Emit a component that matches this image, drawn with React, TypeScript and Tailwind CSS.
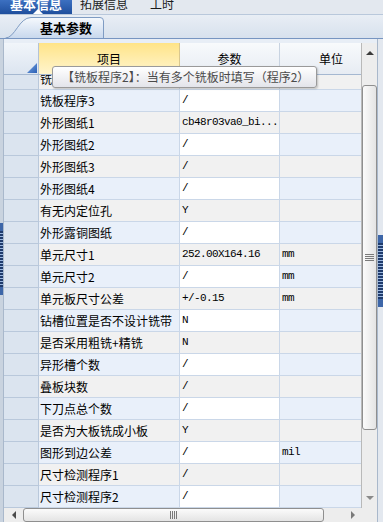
import React from 'react'

type Row = { label: string; value: string; unit: string }

const rows: Row[] = [
  { label: '铣板程序2', value: '/', unit: '' },
  { label: '铣板程序3', value: '/', unit: '' },
  { label: '外形图纸1', value: 'cb48r03va0_bi...', unit: '' },
  { label: '外形图纸2', value: '/', unit: '' },
  { label: '外形图纸3', value: '/', unit: '' },
  { label: '外形图纸4', value: '/', unit: '' },
  { label: '有无内定位孔', value: 'Y', unit: '' },
  { label: '外形露铜图纸', value: '/', unit: '' },
  { label: '单元尺寸1', value: '252.00X164.16', unit: 'mm' },
  { label: '单元尺寸2', value: '/', unit: 'mm' },
  { label: '单元板尺寸公差', value: '+/-0.15', unit: 'mm' },
  { label: '钻槽位置是否不设计铣带', value: 'N', unit: '' },
  { label: '是否采用粗铣+精铣', value: 'N', unit: '' },
  { label: '异形槽个数', value: '/', unit: '' },
  { label: '叠板块数', value: '/', unit: '' },
  { label: '下刀点总个数', value: '/', unit: '' },
  { label: '是否为大板铣成小板', value: 'Y', unit: '' },
  { label: '图形到边公差', value: '/', unit: 'mil' },
  { label: '尺寸检测程序1', value: '/', unit: '' },
  { label: '尺寸检测程序2', value: '/', unit: '' },
]

const cjk = "font-['Noto_Sans_CJK_SC',sans-serif]"
const mono = "font-['Liberation_Mono',monospace] text-[11px] tracking-[-0.6px]"

function SplitterHandle() {
  return (
    <div className="flex h-[72px] flex-col bg-[#2a4a7e]">
      <div className="h-[8px] bg-[#3d66a8]" />
      <div className="flex-1 bg-[repeating-linear-gradient(to_bottom,#1f3b6c_0px,#1f3b6c_2px,#9ab7e0_2px,#9ab7e0_3px)]" />
      <div className="h-[8px] bg-[#3d66a8]" />
    </div>
  )
}

function VScroll() {
  return (
    <div className="flex w-[15px] flex-col bg-[#ededed]">
      <div className="flex h-[20px] items-center justify-center">
        <span className="h-0 w-0 border-x-[4px] border-b-[4px] border-x-transparent border-b-[#3a3a3a]" />
      </div>
      <div className="h-[22px]" />
      <div className="flex h-[345px] flex-col items-center justify-center gap-[1px] rounded-[3px] border border-[#8f8f8f] bg-gradient-to-r from-[#fbfbfb] to-[#e4e4e4]">
        <span className="h-[1px] w-[9px] bg-[#7a7a7a]" />
        <span className="h-[1px] w-[9px] bg-[#7a7a7a]" />
        <span className="h-[1px] w-[9px] bg-[#7a7a7a]" />
        <span className="h-[1px] w-[9px] bg-[#7a7a7a]" />
      </div>
      <div className="flex-1" />
      <div className="flex h-[21px] items-center justify-center">
        <span className="h-0 w-0 border-x-[4px] border-t-[4px] border-x-transparent border-t-[#8a8a8a]" />
      </div>
    </div>
  )
}

function HScroll() {
  return (
    <div className="flex h-[14px] w-[358px] bg-[#ededed]">
      <div className="flex w-[19px] items-center justify-center">
        <span className="h-0 w-0 border-y-[4px] border-r-[4px] border-y-transparent border-r-[#4a4a4a]" />
      </div>
      <div className="flex w-[301px] items-center justify-center gap-[1px] rounded-[3px] border border-[#8f8f8f] bg-gradient-to-b from-[#fbfbfb] to-[#e4e4e4]">
        <span className="h-[8px] w-[1px] bg-[#7a7a7a]" />
        <span className="h-[8px] w-[1px] bg-[#7a7a7a]" />
        <span className="h-[8px] w-[1px] bg-[#7a7a7a]" />
        <span className="h-[8px] w-[1px] bg-[#7a7a7a]" />
      </div>
      <div className="flex-1" />
      <div className="flex w-[19px] items-center justify-center">
        <span className="h-0 w-0 border-y-[4px] border-l-[4px] border-y-transparent border-l-[#7a7a7a]" />
      </div>
    </div>
  )
}

export default function App() {
  return (
    <div className={`flex h-[522px] w-[383px] flex-col overflow-hidden bg-[#e2e8f0] ${cjk}`}>
      {/* main tabs, scrolled so their tops are cut */}
      <div className="flex h-[15px] shrink-0 items-end overflow-hidden border-b border-[#b9c8db] bg-[#e3e8ef]">
        <div className="relative flex h-full w-[72px] items-end justify-center bg-gradient-to-b from-[#3c70c1] to-[#1f4f9d]">
          <span className="mb-[4px] text-[13px] font-bold leading-none text-white">基本信息</span>
          <span className="absolute bottom-0 left-[33px] h-0 w-0 border-x-[5px] border-b-[5px] border-x-transparent border-b-white" />
        </div>
        <span className="mb-[4px] ml-[8px] text-[12px] leading-none text-[#1a1a1a]">拓展信息</span>
        <span className="mb-[4px] ml-[22px] text-[12px] leading-none text-[#1a1a1a]">工时</span>
      </div>

      {/* sub tabs */}
      <div className="flex h-[24px] shrink-0 items-end border-b border-[#7795c1] bg-gradient-to-b from-[#e9eef5] to-[#d7e1ed] pl-[5px]">
        <div className="relative h-[21px] w-[99px]">
          <svg className="absolute inset-0" width="99" height="21" viewBox="0 0 99 21">
            <defs>
              <linearGradient id="subtab" x1="0" y1="0" x2="0" y2="1">
                <stop offset="0" stopColor="#f6f9fd" />
                <stop offset="1" stopColor="#c8d8ed" />
              </linearGradient>
            </defs>
            <path d="M0.5 21 C10 21 14 0.5 26 0.5 L95 0.5 Q98.5 0.5 98.5 4 L98.5 21" fill="url(#subtab)" stroke="#7f9cc3" />
          </svg>
          <span className="relative flex h-full items-center pl-[35px] text-[13px] font-bold leading-none text-black">基本参数</span>
        </div>
      </div>

      {/* panel */}
      <div className="flex min-h-0 flex-1">
        <div className="flex w-[4px] flex-col border-r border-[#a9b8cb] bg-[#c9d3df]">
          <div className="h-[184px]" />
          <SplitterHandle />
        </div>

        <div className="flex w-[373px] flex-col bg-[#e8eef6] pt-[4px]">
          <div className="flex h-[465px]">
            <div className="relative w-[358px] overflow-hidden border-r border-[#b9b9b9] bg-white">
              {/* header */}
              <div className="flex h-[32px] w-[378px] border-b border-[#a5b8d1] text-[12px] text-black">
                <div className="relative w-[35px] border-r border-[#b4c3d6] bg-gradient-to-b from-[#f1f5fa] to-[#dce5f0]">
                  <svg className="absolute bottom-[1px] right-[1px]" width="10" height="10" viewBox="0 0 10 10">
                    <defs>
                      <linearGradient id="corner" x1="0" y1="0" x2="1" y2="1">
                        <stop offset="0" stopColor="#7aa8e6" />
                        <stop offset="1" stopColor="#2b5fb4" />
                      </linearGradient>
                    </defs>
                    <path d="M10 0 L10 10 L0 10 Z" fill="url(#corner)" />
                  </svg>
                </div>
                <div className="flex w-[141px] items-center justify-center border-r border-[#d9c78f] bg-gradient-to-b from-[#ffe487] to-[#fff4cc]">项目</div>
                <div className="flex w-[100px] items-center justify-center border-r border-[#c8d3e1] bg-gradient-to-b from-[#f8fafc] to-[#e7ecf3]">参数</div>
                <div className="flex w-[102px] items-center justify-center bg-gradient-to-b from-[#f8fafc] to-[#e7ecf3]">单位</div>
              </div>

              {/* body, scrolled down a few pixels */}
              <div className="h-[433px] overflow-hidden">
                <div className="-mt-[7px]">
                  {rows.map((row, i) => {
                    const alt = i % 2 === 0
                    return (
                      <div key={row.label} className="flex h-[22px] w-[378px] text-black">
                        <div className="w-[35px] border-b border-r border-[#b9c8db] bg-[#dbe4ef]" />
                        <div className={`flex w-[141px] items-center whitespace-nowrap border-b border-r border-[#cad7e8] pl-[1px] text-[12px] ${alt ? 'bg-[#f1f1f1]' : 'bg-[#e9f0fa]'}`}>
                          {row.label}
                        </div>
                        <div className={`flex w-[100px] items-center whitespace-nowrap border-b border-r border-[#cad7e8] pl-[2px] ${mono} ${alt ? 'bg-[#f1f1f1]' : 'bg-white'}`}>
                          {row.value}
                        </div>
                        <div className={`flex w-[102px] items-center whitespace-nowrap border-b border-[#cad7e8] pl-[2px] ${mono} ${alt ? 'bg-[#f1f1f1]' : 'bg-[#e9f0fa]'}`}>
                          {row.unit}
                        </div>
                      </div>
                    )
                  })}
                </div>
              </div>

              {/* tooltip */}
              <div className="absolute left-[48px] top-[23px] flex h-[22px] w-[265px] items-center whitespace-nowrap rounded-[3px] border border-[#9a9a9a] bg-gradient-to-b from-white to-[#e3e4ea] pl-[9px] text-[12px] text-[#4a4a4a] shadow-[1px_1px_2px_rgba(0,0,0,0.2)]">
                【铣板程序2】：当有多个铣板时填写（程序2）
              </div>
            </div>
            <VScroll />
          </div>
          <div className="flex h-[14px]">
            <HScroll />
            <div className="w-[15px] bg-[#ededed]" />
          </div>
        </div>

        <div className="flex w-[6px] flex-col border-l border-[#a9b8cb] bg-[#e3e8ef]">
          <div className="h-[196px]" />
          <SplitterHandle />
        </div>
      </div>
    </div>
  )
}
